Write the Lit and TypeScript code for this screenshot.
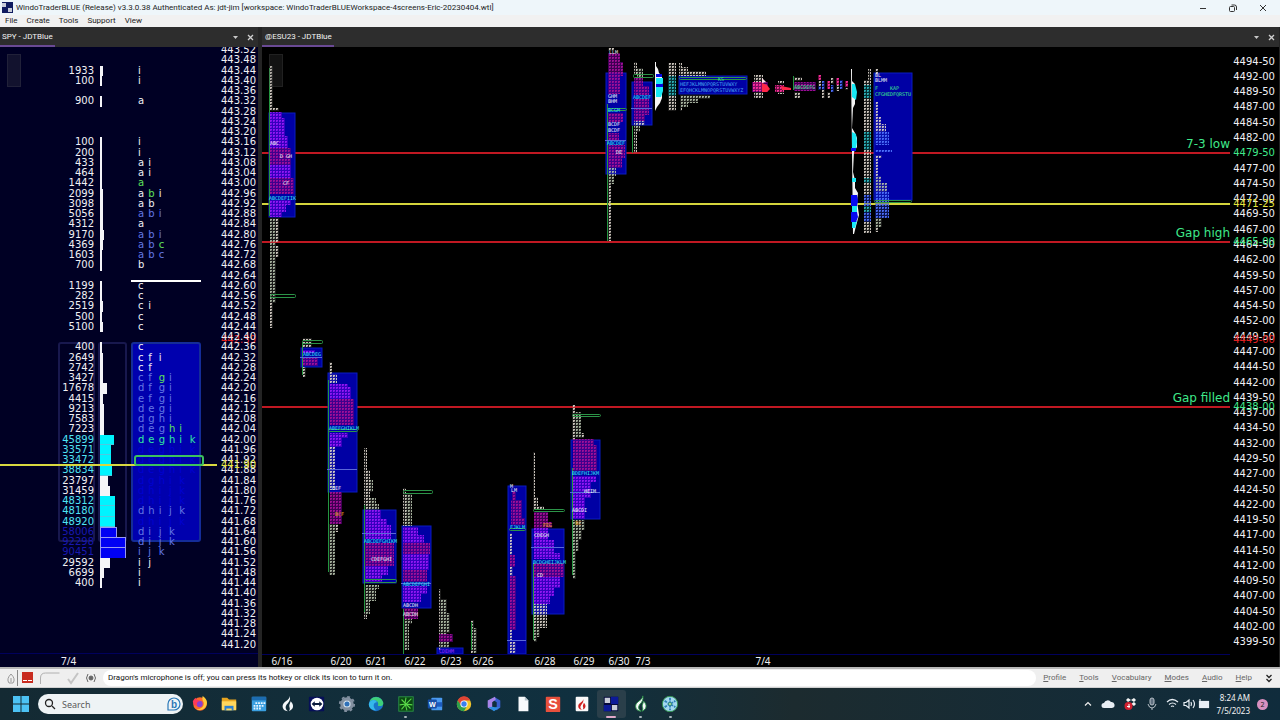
import { LitElement, html, svg, css } from "lit";
import { customElement } from "lit/decorators.js";

/* volume, marks, heat. Each mark is a letter followed by its tone digit:
   0 white, 1 green, 2 soft blue, 3 nearly hidden, 4 mint */
const SPY_ROWS: Record<string, [number, string, string?]> = {
  "443.44": [1933, "i0"], "443.40": [100, "i0"], "443.32": [900, "a0"],
  "443.16": [100, "i0"], "443.12": [200, "i0"], "443.08": [433, "a0i0"],
  "443.04": [464, "a0i0"], "443.00": [1442, "a1"], "442.96": [2099, "a0b1i0"],
  "442.92": [3098, "a0b0"], "442.88": [5056, "a2b2i2"], "442.84": [4312, "a0"],
  "442.80": [9170, "a2b2i2"], "442.76": [4369, "a2b2c1"], "442.72": [1603, "a2b2c2"],
  "442.68": [700, "b0"], "442.60": [1199, "c0"], "442.56": [282, "c0"],
  "442.52": [2519, "c0i0"], "442.48": [500, "c0"], "442.44": [5100, "c0"],
  "442.36": [400, "c0"], "442.32": [2649, "c0f0i0"], "442.28": [2742, "c0f0"],
  "442.24": [3427, "c2f2g1i2"], "442.20": [17678, "d2f2g2i2"], "442.16": [4415, "e2f2g2i2"],
  "442.12": [9213, "d2e2g2i2"], "442.08": [7583, "d2g2h2i2"], "442.04": [7223, "d2e2g2h1i1"],
  "442.00": [45899, "d4e4g4h4i4k4", "hot"], "441.96": [33571, "d3e3g3h3i3k3", "hot"],
  "441.92": [33472, "d3e3g3h3i3k3", "hot"], "441.88": [38834, "d3e3g3h3i3k3", "hot"],
  "441.84": [23797, "d3g3h3i3k3"], "441.80": [31459, "d3h3i3j3k3"],
  "441.76": [48312, "d3h3i3j3k3", "hot"], "441.72": [48180, "d2h2i2j2k2", "hot"],
  "441.68": [48920, "d3h3i3j3k3", "hot"], "441.64": [58006, "d2i2j2k2", "peak"],
  "441.60": [92298, "d2i2j2k2", "peak"], "441.56": [90451, "i2j2k2", "peak"],
  "441.52": [29592, "i0j0"], "441.48": [6699, "i0"], "441.44": [400, "i0"],
};
const SPY_TOP = 443.52;
const SPY_COUNT = 59;
const MAX_VOLUME = 92298;
const spyPrices = Array.from({ length: SPY_COUNT }, (_, i) => (SPY_TOP - i * 0.04).toFixed(2));
const spyY = (p: number) => (((SPY_TOP - p) / 0.04 + 0.5) / SPY_COUNT) * 100;

const ES_TOP = 4494.5;
const ES_COUNT = 39;
const esLabel = (p: number) => {
  const whole = Math.floor(p);
  return `${whole}-${String(Math.round((p - whole) * 100)).padStart(2, "0")}`;
};
const esPrices = Array.from({ length: ES_COUNT }, (_, i) => ES_TOP - i * 2.5);
const esY = (p: number) => (((ES_TOP - p) / 2.5 + 0.5) / ES_COUNT) * 100;
const LEVELS = [
  { price: 4479.5, name: "7-3 low", line: "red", tag: "green" },
  { price: 4471.25, name: "", line: "yellow", tag: "yellow" },
  { price: 4465, name: "Gap high", line: "red", tag: "green" },
  { price: 4449, name: "", line: "", tag: "red" },
  { price: 4438, name: "Gap filled", line: "red", tag: "green" },
];

const TONES: Record<string, string> = {
  w: "#d8d0c8", g: "#b0bca8", p: "#9818f8", m: "#a81098", t: "#30b8c0",
  b: "#4f74ff", k: "#ff2fa0",
};
type Block = [tone: string, x0: number, y0: number, x1: number, y1: number];
type Note = [text: string, x: number, y: number, fill: string];
interface Session {
  area?: [number, number, number, number];
  open?: [number, number, number, number];
  stem?: [number, number, number];
  mid?: number;
  blocks: Block[];
  notes?: Note[];
}
const CY = "#35e0f5", WH = "#f4eef8", GR = "#3fe08c", OR = "#f0a828";

const SESSIONS: Session[] = [
  { area: [269, 113, 295, 217], open: [270, 294, 296, 298], stem: [269, 68, 216],
    blocks: [["w", 270, 66, 273, 111], ["w", 273, 108, 279, 111], ["p", 270, 112, 282, 118], ["p", 270, 118, 285, 136],
      ["p", 270, 136, 288, 148], ["m", 270, 148, 291, 165], ["p", 270, 165, 291, 178], ["m", 270, 178, 294, 194],
      ["p", 270, 200, 291, 205], ["p", 270, 205, 286, 212], ["p", 270, 212, 282, 217],
      ["g", 270, 218, 276, 303], ["w", 276, 218, 279, 242], ["w", 276, 246, 279, 257], ["w", 270, 303, 273, 328]],
    notes: [["ABC", 270, 145, WH], ["D GH", 280, 158, WH], ["CF", 283, 185, WH], ["ABCDEFIIK", 269, 200, CY]] },
  { area: [301, 348, 322, 367], open: [302, 340, 323, 344], mid: 357, stem: [302, 342, 375],
    blocks: [["w", 303, 338, 312, 347], ["p", 303, 350, 315, 353], ["m", 303, 357, 318, 366], ["w", 303, 367, 306, 377]],
    notes: [["ABCDEG", 303, 356, CY]] },
  { area: [328, 373, 357, 492], open: [328, 429, 358, 432], mid: 469, stem: [328, 380, 572],
    blocks: [["w", 329, 362, 332, 374], ["w", 329, 374, 337, 383], ["p", 330, 384, 348, 387], ["p", 330, 387, 351, 399],
      ["m", 330, 399, 354, 425], ["p", 330, 433, 348, 438], ["p", 330, 438, 342, 447], ["w", 329, 447, 335, 490],
      ["m", 330, 492, 342, 524], ["g", 329, 524, 335, 575], ["w", 335, 524, 338, 532]],
    notes: [["ABEFGHIKLM", 329, 430, CY], ["DEF", 332, 490, WH], ["BCF", 335, 516, OR]] },
  { area: [363, 510, 396, 583], open: [364, 579, 397, 583], mid: 533, stem: [364, 505, 612],
    blocks: [["w", 364, 448, 367, 510], ["w", 367, 470, 370, 510], ["g", 370, 480, 373, 492], ["g", 370, 498, 376, 504], ["g", 370, 504, 379, 510],
      ["p", 364, 510, 381, 519], ["p", 364, 519, 387, 525], ["p", 364, 525, 391, 539], ["m", 364, 543, 394, 566],
      ["p", 364, 566, 388, 575], ["p", 364, 575, 382, 582], ["g", 364, 585, 379, 589], ["g", 364, 589, 376, 601], ["g", 364, 601, 370, 614], ["w", 364, 614, 367, 619]],
    notes: [["ABCDEFGHIKM", 364, 543, CY], ["CDEFGHI", 371, 561, WH]] },
  { area: [402, 526, 431, 608], open: [403, 490, 433, 494], mid: 583, stem: [403, 609, 654],
    blocks: [["w", 403, 488, 406, 526], ["g", 406, 494, 412, 526], ["p", 403, 527, 418, 535], ["p", 403, 535, 424, 543],
      ["m", 403, 543, 430, 554], ["p", 403, 554, 429, 570], ["m", 403, 570, 427, 582], ["p", 403, 586, 427, 594], ["p", 403, 594, 421, 602],
      ["m", 403, 608, 418, 619], ["g", 403, 619, 412, 624], ["g", 403, 624, 409, 650]],
    notes: [["ABCDEFGHI", 403, 586, CY], ["ABCDH", 403, 607, WH], ["ABCDH", 403, 616, WH]] },
  { area: [437, 648, 463, 654],
    blocks: [["w", 439, 589, 441, 650], ["g", 441, 599, 447, 635], ["g", 447, 613, 450, 633], ["m", 439, 634, 453, 642], ["g", 440, 642, 449, 648]],
    notes: [["CDEHM", 439, 653, "#a030ff"]] },
  { stem: [471, 622, 650], blocks: [["w", 471, 620, 474, 653], ["g", 474, 628, 477, 653]] },
  { area: [508, 486, 526, 654], open: [509, 528, 526, 531], mid: 640,
    blocks: [["m", 512, 492, 516, 500], ["m", 511, 500, 522, 518], ["m", 511, 518, 525, 525], ["w", 510, 533, 512, 555], ["m", 510, 555, 515, 567],
      ["w", 510, 567, 513, 576], ["m", 510, 576, 516, 630], ["w", 510, 630, 512, 640], ["w", 510, 642, 516, 653]],
    notes: [["M", 510, 488, WH], ["LM", 511, 492, WH], ["FJKLM", 510, 529, CY]] },
  { area: [532, 529, 564, 614], open: [533, 509, 565, 512], mid: 547, stem: [533, 563, 640],
    blocks: [["w", 533, 452, 535, 510], ["w", 535, 497, 538, 510], ["w", 538, 506, 544, 510], ["m", 534, 512, 548, 522], ["m", 534, 522, 552, 528],
      ["p", 534, 528, 548, 540], ["p", 534, 540, 554, 553], ["p", 534, 553, 560, 559], ["m", 534, 563, 564, 577],
      ["p", 534, 577, 560, 588], ["p", 534, 588, 554, 596], ["p", 534, 596, 550, 604], ["w", 534, 604, 547, 628], ["g", 534, 628, 540, 637], ["g", 534, 637, 537, 642]],
    notes: [["FEG", 543, 527, OR], ["CDEGH", 534, 537, WH], ["BCDGHEIJKLM", 533, 564, CY], ["CD", 537, 577, WH]] },
  { area: [571, 440, 600, 519], open: [572, 414, 601, 417], mid: 492, stem: [572, 468, 575],
    blocks: [["w", 572, 405, 575, 440], ["g", 575, 412, 581, 438], ["w", 581, 433, 584, 438], ["m", 573, 439, 594, 445], ["m", 573, 445, 597, 471],
      ["p", 573, 476, 596, 482], ["p", 573, 482, 591, 498], ["p", 573, 498, 585, 519], ["g", 573, 520, 585, 530], ["g", 573, 530, 582, 540], ["g", 573, 540, 579, 551], ["g", 573, 551, 576, 579]],
    notes: [["BDEFHIJKM", 572, 475, CY], ["HEIM", 584, 493, WH], ["ABCDI", 572, 512, WH], ["BC", 575, 525, OR]] },
  { area: [606, 73, 626, 174], open: [607, 108, 627, 111], mid: 140, stem: [607, 104, 241],
    blocks: [["w", 608, 48, 614, 51], ["m", 608, 53, 620, 62], ["m", 608, 62, 623, 76], ["m", 608, 76, 620, 94], ["m", 608, 113, 623, 122],
      ["m", 608, 133, 619, 140], ["m", 608, 145, 625, 158], ["m", 608, 158, 622, 168], ["g", 608, 168, 616, 176], ["g", 608, 176, 614, 184], ["w", 608, 184, 611, 241]],
    notes: [["LLM", 609, 54, WH], ["GHM", 608, 98, WH], ["BHM", 608, 103, WH], ["BCGM", 608, 112, CY], ["BCDF", 608, 126, WH], ["BCDF", 608, 132, WH], ["ABCDEF", 607, 145, CY], ["DE", 616, 154, WH]] },
  { area: [632, 82, 652, 125], open: [633, 74, 654, 78], mid: 108, stem: [632, 126, 153],
    blocks: [["w", 634, 62, 637, 74], ["g", 637, 68, 643, 78], ["m", 634, 78, 643, 86], ["m", 634, 86, 649, 95], ["m", 634, 99, 649, 115],
      ["m", 634, 115, 645, 121], ["w", 634, 121, 645, 125], ["g", 634, 125, 640, 132], ["w", 634, 132, 637, 153]],
    notes: [["ABCDEF", 633, 99, CY]] },
  { blocks: [["w", 668, 63, 676, 76], ["t", 668, 76, 676, 96], ["w", 668, 96, 676, 111]] },
  { area: [679, 76, 747, 94], open: [679, 77, 747, 80],
    blocks: [["w", 679, 63, 682, 67], ["w", 679, 67, 688, 71], ["w", 679, 71, 706, 76], ["g", 680, 95, 710, 99], ["g", 680, 99, 698, 103], ["g", 680, 103, 688, 107], ["w", 680, 107, 682, 111]],
    notes: [["HEFJKLMNOPQRSTUVWXY", 680, 86, "#48a4f0"], ["EFQHCKLMNOPQRSTUVWXYZ", 680, 92, "#48a4f0"], ["KS", 718, 81, GR]] },
  { blocks: [["w", 754, 75, 763, 82], ["m", 752, 82, 768, 92], ["k", 753, 82, 762, 91], ["w", 754, 92, 763, 98]] },
  { blocks: [["w", 778, 81, 784, 84], ["k", 775, 85, 784, 92], ["w", 778, 92, 784, 94]] },
  { stem: [793, 76, 90], blocks: [["w", 794, 77, 802, 81], ["m", 794, 82, 816, 91], ["w", 794, 92, 800, 98]],
    notes: [["ABCDEFG", 794, 89, GR]] },
  { blocks: [["k", 818, 75, 821, 80], ["w", 818, 81, 821, 86], ["b", 818, 86, 821, 90], ["b", 822, 81, 825, 90], ["w", 822, 90, 825, 98], ["k", 827, 81, 830, 89], ["w", 827, 92, 830, 98],
      ["w", 831, 78, 834, 84], ["b", 831, 85, 834, 92], ["k", 836, 78, 839, 85], ["w", 836, 85, 839, 91], ["b", 840, 80, 843, 89], ["k", 845, 81, 848, 87], ["w", 845, 88, 848, 90]] },
  { blocks: [["w", 864, 80, 871, 85], ["w", 864, 98, 871, 132], ["w", 868, 69, 871, 80], ["w", 864, 150, 871, 178], ["w", 864, 183, 871, 195], ["w", 864, 222, 871, 233],
      ["t", 864, 85, 871, 98], ["t", 864, 132, 871, 150], ["t", 864, 178, 871, 183], ["b", 864, 195, 871, 206], ["t", 864, 206, 871, 212], ["b", 864, 212, 871, 222]] },
  { area: [874, 73, 912, 200], open: [874, 200, 912, 203],
    blocks: [["w", 875, 69, 878, 74], ["w", 875, 102, 878, 124], ["w", 878, 117, 881, 124], ["w", 875, 124, 886, 132], ["b", 875, 132, 889, 145],
      ["b", 875, 150, 892, 152], ["w", 875, 155, 882, 158], ["w", 875, 158, 878, 176], ["g", 875, 176, 881, 183], ["g", 875, 183, 887, 192], ["b", 875, 192, 889, 218], ["g", 875, 218, 882, 227], ["w", 875, 227, 878, 232]],
    notes: [["BL", 875, 77, WH], ["BLMM", 875, 82, WH], ["F    KAP", 875, 90, GR], ["CFGHEDFQRSTU", 875, 96, GR]] },
];
const DATES: [string, number][] = [["6/16", 282], ["6/20", 341], ["6/21", 376], ["6/22", 415], ["6/23", 451],
  ["6/26", 483], ["6/28", 545], ["6/29", 584], ["6/30", 619], ["7/3", 643], ["7/4", 763]];

const drawSession = (s: Session) => svg`
  ${s.area ? svg`<rect class="area" x=${s.area[0]} y=${s.area[1]} width=${s.area[2] - s.area[0]} height=${s.area[3] - s.area[1]}/>` : ""}
  ${s.blocks.map(([t, x0, y0, x1, y1]) => svg`
    <rect class="haze-${t}" x=${x0} y=${y0} width=${x1 - x0} height=${y1 - y0}/>
    <rect fill="url(#dots-${t})" x=${x0} y=${y0} width=${x1 - x0} height=${y1 - y0}/>`)}
  ${s.stem ? svg`<path class="stem" d="M${s.stem[0] + 0.5} ${s.stem[1]}V${s.stem[2]}"/>` : ""}
  ${s.mid && s.area ? svg`<path class="mid" d="M${s.area[0] - 1} ${s.mid + 0.5}H${s.area[2]}"/>` : ""}
  ${s.open ? svg`<rect class="open" x=${s.open[0] + 0.5} y=${s.open[1] + 0.5} width=${s.open[2] - s.open[0] - 1} height=${s.open[3] - s.open[1] - 1} rx="1"/>` : ""}
  ${(s.notes ?? []).map(([t, x, y, f]) => svg`<text class="note" x=${x} y=${y} fill=${f}>${t}</text>`)}`;

const flame = (c: string) => svg`<path fill=${c} d="M12 2c0 5-8 6-8 11.500 0 3.500 3 5.500 6 5.500-3-2-3.500-5-1-8C11 9 13 6 12 2z"/><path fill=${c} d="M13 8c4 4 3.500 9-2 11 1.500-2 1-3.500 .5-5-.5-2 1-4 1.500-6z"/>`;
const APPS: { name: string; state?: string; art: unknown }[] = [
  { name: "Firefox", art: svg`<circle cx="10" cy="11" r="7.500" fill="#ff6a2a"/><path fill="#ffc93a" d="M13 2c4 3 6 6 4 11-2 4-7 6-11 4 6 0 9-4 8-8-1-2-2-4-1-7z"/><circle cx="9.500" cy="11" r="3.500" fill="#8a3fd0"/><path fill="#ff3a5a" d="M2 8c1-2 2-3 3-4l1 2c2 0 3 1 4 2-3 0-4 2-3 4-2 1-4 2-5-4z"/>` },
  { name: "File Explorer", art: svg`<path fill="#e8a520" d="M2 4h6l2 2h8v11H2z"/><path fill="#ffd65c" d="M2 8h16v10H2z"/><path fill="#2a7fd0" d="M5 13h10v5H5z"/><path fill="#ffd65c" d="M7 16h6v2H7z"/>` },
  { name: "Calendar", art: svg`<rect x="2" y="3" width="16" height="16" rx="1" fill="#3a9fe0"/><path fill="#1c6cb0" d="M2 3h16v4H2z"/><path stroke="#e8f6ff" stroke-width="2" stroke-dasharray="2 1" d="M6 10h11M4 13h12M4 16h9"/>` },
  { name: "Dragon", art: flame("#f5f8fa") },
  { name: "TeamViewer", art: svg`<rect x="1" y="3" width="17" height="16" rx="1" fill="#060f58"/><circle cx="10" cy="11" r="7" fill="#fff"/><path fill="#0a1b3c" d="M4 11l3.500-3v2h5V8l3.500 3-3.500 3v-2h-5v2z"/>` },
  { name: "Settings", art: svg`<circle cx="10" cy="11" r="5.500" fill="none" stroke="#8390a0" stroke-width="4"/><circle cx="10" cy="11" r="8" fill="none" stroke="#8390a0" stroke-width="2" stroke-dasharray="3.140 3.140"/><circle cx="10" cy="11" r="4" fill="#dce8f2"/><circle cx="10" cy="11" r="2.800" fill="#2f70b8"/>` },
  { name: "Edge", art: svg`<circle cx="10" cy="11" r="8" fill="#1a74c8"/><path fill="#3ecf7a" d="M3 8c2-6 12-7 15 1 1 4-3 5-6 4 2-5-3-8-9-5z"/><path fill="#35b8ea" d="M2 11c1-5 8-6 9-2-4 0-5 5-1 9-5 0-8-3-8-7z"/>` },
  { name: "Charting", state: "open", art: svg`<rect x="2" y="3" width="16" height="16" fill="#0a4a12"/><g fill="none" stroke="#58d848" stroke-width="1.200"><path d="M10 4l-1 6 2 8M3 12l7-1 7 1M5 6l5 5 5 5M16 5l-6 6-5 6"/></g>` },
  { name: "Word", art: svg`<rect x="6" y="4" width="12" height="14" rx="1" fill="#4a9af0"/><path fill="#1c5cc0" d="M6 9h12v5H6z"/><rect x="2" y="6" width="10" height="10" rx="1" fill="#184fa8"/><text x="7" y="14" class="logo" font-size="8">W</text>` },
  { name: "Chrome", art: svg`<circle cx="10" cy="11" r="8" fill="#f0c42c"/><path fill="#e04434" d="M3 7c3-6 11-6 14 0h-7l-4 5z"/><path fill="#2ea04c" d="M3 7c-3 5 1 12 7 12l3.500-6H7z"/><circle cx="10" cy="11" r="4" fill="#fff"/><circle cx="10" cy="11" r="3" fill="#3a7ff0"/>` },
  { name: "Microsoft 365", art: svg`<path fill="#3a5fd0" d="M10 3l7 4v8l-4 3-3-2 3-2V9l-3-2z"/><path fill="#a884e8" d="M11 3L3 7v8l4 2 1-2V9l4-3z"/><path fill="#2f8fe0" d="M4 15l4-1 5 1 4-1-7 5z"/>` },
  { name: "Document", art: svg`<path fill="#f8fafc" d="M5 3h7l4 4v12H5z"/><path fill="#b8c4cc" d="M12 3v4h4z"/>` },
  { name: "Snagit", art: svg`<rect x="2" y="3" width="16" height="17" rx="1" fill="#e8503c"/><text x="10" y="17" class="logo" font-size="16">S</text>` },
  { name: "Dragon Bar", art: svg`<rect x="3" y="3" width="14" height="16" rx="1" fill="#fafafa"/><g transform="translate(3 4) scale(.7)">${flame("#d02020")}</g>` },
  { name: "WindoTrader", state: "active", art: svg`<path fill="#04083c" d="M2 3h16v16H2z"/><path fill="#c8ccd8" d="M3 4h6v6H3zM11 12h6v6h-6z"/><path fill="#0c1a98" d="M10 3h8v8h-8zM2 12h8v7H2z"/>` },
  { name: "Dragon NaturallySpeaking", state: "open", art: flame("#f5f8fa") },
  { name: "Snowflake", state: "open", art: svg`<circle cx="10" cy="11" r="8.500" fill="#a4d8f0"/><path stroke="#2f80b8" stroke-width="2" stroke-dasharray="3 1" d="M10 4v14M4 7.500l12 7M4 14.500l12-7"/><circle cx="10" cy="11" r="1.500" fill="#fff"/>` },
];

@customElement("app-root")
export class AppRoot extends LitElement {
  static styles = css`
    :host { display: block; font-family: "Noto Sans", sans-serif; }
    * { box-sizing: border-box; }
    button { border: 0; padding: 0; background: none; color: inherit; font: inherit; display: inline-flex; align-items: center; justify-content: center; }
    svg { display: block; }
    .app { height: 100vh; min-height: 480px; display: flex; flex-direction: column; background: #242424; }
    .title { height: 15px; display: flex; align-items: center; background: #eef6fa; color: #1c1c1c; font: 8px/15px Roboto, sans-serif; padding: 0 9px 0 2px; flex: none; }
    .title h1 { font: inherit; margin: 0 auto 0 3px; white-space: nowrap; }
    .win { display: flex; gap: 14px; }
    .win button { width: 16px; height: 15px; }
    .menu { height: 12px; flex: none; display: flex; gap: 9px; padding-left: 5px; background: #f1f1f1; color: #222; font: 8px/12px Roboto, sans-serif; }
    .dock { flex: 1; min-height: 0; display: flex; gap: 4px; }
    .panel { display: flex; flex-direction: column; min-width: 0; }
    .spy { flex: 0 0 258px; }
    .es { flex: 1; padding-right: 1px; }
    .tabs { height: 20px; flex: none; display: flex; justify-content: space-between; background: #2d2d2d; color: #f2f2f2; font: 8px/18px Roboto, sans-serif; }
    .tab { border-bottom: 2px solid #6a4a94; padding: 1px 2px 0; }
    .es .tab { padding-left: 3px; }
    .acts { display: flex; gap: 6px; color: #c8c8c8; padding-right: 3px; }
    .acts button { width: 9px; }
    .chart { flex: 1; min-height: 0; position: relative; overflow: hidden; display: flex; flex-direction: column; font-family: "DejaVu Sans", sans-serif; font-size: 10px; line-height: 10px; color: #f0f0f4; }
    .spy .chart { background: #000024; }
    .es .chart { background: #000; }
    .handle { position: absolute; top: 7px; left: 7px; width: 14px; height: 33px; background: rgb(90 90 90 / .2); border: 1px solid rgb(120 120 120 / .15); z-index: 2; }
    .ladder { position: relative; flex: 1; min-height: 0; display: flex; flex-direction: column; margin-top: -2px; margin-bottom: 3px; }
    .row { flex: 1; min-height: 0; display: grid; grid-template-columns: 94px 6px 26px 12px 62px 1fr; align-items: center; padding-right: 2px; position: relative; }
    .vol { text-align: right; }
    .vol.hot { color: #4fe4f4; }
    .vol.peak { color: #1818b0; }
    .bar { grid-column: 3; height: 100%; background: #f4f4f8; }
    .bar.hot { background: #00f4ff; border-bottom: 1px solid #50c8e0; }
    .bar.peak { background: #0000f4; border: 1px solid #9898f0; border-bottom: 0; }
    .marks { grid-column: 5; display: flex; }
    .mark { flex: 0 0 calc(100% / 6); }
    .t1 { color: #5fe05a; }
    .t2 { color: #6478e4; }
    .t3 { color: #0000d0; }
    .t4 { color: #30e8a0; }
    .price { grid-column: 6; text-align: right; white-space: nowrap; }
    .zone { position: absolute; border: 2px solid #18184e; border-radius: 3px; }
    .zone.volumes { left: 58px; width: 37px; }
    .zone.bars { left: 98px; width: 29px; }
    .zone.value { left: 131px; width: 70px; background: #0000ae; border-color: #142c98; }
    .rule { position: absolute; height: 2px; }
    .rule.split { left: 131px; width: 70px; background: #fff; }
    .rule.last { left: 0; width: 217px; background: #d8d840; z-index: 1; }
    .poc { position: absolute; left: 134px; width: 70px; height: 11px; margin-top: -5px; border: 2px solid #3cc060; border-radius: 3px; z-index: 1; }
    .tag { position: absolute; right: 2px; margin-top: -5px; }
    .green { color: #3fe88a; }
    .yellow { color: #e4e43c; }
    .red { color: #e02020; }
    .axis { height: 14px; flex: none; border-top: 1px solid #00005c; padding: 1px 0 0 61px; font-family: "Noto Sans", sans-serif; line-height: 12px; }
    .plot { position: absolute; inset: 0; width: 100%; height: 100%; z-index: 1; }
    .scale { position: relative; flex: 1; min-height: 0; display: flex; flex-direction: column; margin: 7px 0 17px; }
    .scale .step { flex: 1; min-height: 0; display: flex; align-items: center; justify-content: flex-end; padding-right: 4px; }
    .level { position: absolute; left: 0; right: 49px; height: 2px; margin-top: -1px; }
    .level.red { background: #c01822; }
    .level.yellow { background: #d4d43c; }
    .name { position: absolute; right: 49px; font-size: 12px; line-height: 14px; margin-top: -16px; color: #3fe88a; }
    .scale .tag { right: 4px; }
    .area { fill: #0000a4; stroke: #0a1cc0; stroke-width: 1; }
    .haze-p { fill: #5a00d0; opacity: .6; }
    .haze-m { fill: #600080; opacity: .65; }
    .haze-w, .haze-g { fill: #a0a09c; opacity: .16; }
    .haze-t { fill: #108890; opacity: .35; }
    .haze-b { fill: #1830c0; opacity: .4; }
    .haze-k { fill: #d01878; opacity: .5; }
    .stem { stroke: #24953f; stroke-width: 1; fill: none; }
    .mid { stroke: #5a68d8; fill: none; }
    .open { stroke: #2c9448; fill: none; }
    .note { font: 5px "DejaVu Sans Mono", monospace; white-space: pre; }
    .date { font: 10px "Noto Sans", sans-serif; fill: #f0f0f0; text-anchor: middle; }
    .logo { font-family: "Liberation Sans", sans-serif; font-weight: bold; fill: #fff; text-anchor: middle; }
    .bing { fill: #2a78b8; stroke: none; }
    .status { height: 21px; flex: none; display: flex; align-items: center; background: #efefef; border-top: 2px solid #b8b8b8; border-bottom: 1px solid #d0d0d0; font: 8px/12px Roboto, sans-serif; padding-right: 7px; gap: 13px; color: #666; }
    .tools { flex: none; width: 103px; height: 100%; display: flex; align-items: center; gap: 3px; padding-left: 4px; margin-right: -13px; }
    .message { flex: 1; background: #fff; height: 16px; line-height: 16px; border-radius: 8px; color: #111; padding-left: 5px; white-space: nowrap; overflow: hidden; margin-right: -6px; }
    .status a { display: inline-block; color: inherit; text-decoration: none; }
    .status a::first-letter { text-decoration: underline; }
    .task { height: 32px; flex: none; display: flex; align-items: center; background: linear-gradient(90deg, #142a33, #10303f 45%, #1c2b2f 62%, #102c3c); color: #f4f4f4; padding: 0 12px; }
    .search { width: 145px; height: 20px; margin: 0 2px 0 8px; border-radius: 10px; background: #eef3f5; display: flex; align-items: center; gap: 6px; padding: 0 2px 0 6px; color: #555; }
    .search input { border: 0; outline: 0; background: none; flex: 1; min-width: 0; font: 9px "Noto Sans", sans-serif; padding: 0; color: #555; }
    .search input::placeholder { color: #5a5a5a; opacity: 1; }
    .apps { display: flex; width: 500px; height: 100%; align-items: center; }
    .apps button { flex: 1; height: 28px; position: relative; border-radius: 3px; }
    .apps .active { background: #2a3f4a; }
    .apps .open::after, .apps .active::after { content: ""; position: absolute; bottom: 0; width: 3px; height: 2px; border-radius: 1px; background: #a8b4ba; }
    .apps .active::after { width: 10px; background: #e0a8c8; }
    .tray { margin-left: auto; display: flex; align-items: center; gap: 7px; }
    .clock { font-size: 8px; line-height: 13px; text-align: right; }
    .badge { width: 11px; height: 11px; border-radius: 50%; background: #d890c0; color: #222; font-size: 7px; line-height: 11px; text-align: center; }
  `;

  private panelActions() {
    return html`<div class="acts">
      <button aria-label="Panel menu"><svg width="9" height="9" viewBox="0 0 9 9"><path fill="#c8c8c8" d="M2 3h5L4.500 6z"/></svg></button>
      <button aria-label="Close panel"><svg width="9" height="9" viewBox="0 0 9 9"><path stroke="#d0d0d0" stroke-width="1.300" d="M2 2l5 5M7 2L2 7"/></svg></button>
    </div>`;
  }

  private spyRow(price: string) {
    const data = SPY_ROWS[price];
    if (!data) return html`<div class="row"><span class="price">${price}</span></div>`;
    const [volume, marks, heat = ""] = data;
    const width = 8 + (volume / MAX_VOLUME) * 92;
    return html`<div class="row">
      <span class="vol ${heat}">${volume}</span>
      <span class="bar ${heat}" style="width:${width}%"></span>
      <span class="marks">${(marks.match(/../g) ?? []).map((m) => html`<span class="mark t${m[1]}">${m[0]}</span>`)}</span>
      <span class="price">${price}</span>
    </div>`;
  }

  private spyPanel() {
    const zoneTop = spyY(442.38);
    const zoneHeight = spyY(441.6) - zoneTop;
    return html`<section class="panel spy">
      <div class="tabs"><span class="tab">SPY - JDTBlue</span>${this.panelActions()}</div>
      <div class="chart">
        <div class="handle"></div>
        <div class="ladder">
          ${["volumes", "bars", "value"].map((z) => html`<div class="zone ${z}" style="top:${zoneTop}%;height:${zoneHeight}%"></div>`)}
          <div class="rule split" style="top:${spyY(442.625)}%"></div>
          <span class="tag red" style="top:${spyY(442.39)}%">442.39</span>
          ${spyPrices.map((p) => this.spyRow(p))}
          <div class="rule last" style="top:${spyY(441.905)}%"></div>
          <div class="poc" style="top:${spyY(441.92)}%"></div>
          <span class="tag yellow" style="top:${spyY(441.9)}%">441.90</span>
        </div>
        <div class="axis">7/4</div>
      </div>
    </section>`;
  }

  private esPlot() {
    return html`<svg class="plot" viewBox="262 47 1017 620" preserveAspectRatio="xMinYMin meet" role="img" aria-label="Market profile">
      <defs>${Object.entries(TONES).map(([id, color]) => svg`
        <pattern id="dots-${id}" width="3" height="3" patternUnits="userSpaceOnUse">
          <path d="M0 0h2v1H0zM0 1h1v1H0z" fill=${color} opacity=".9"/><path d="M1 1h1v1H1z" fill=${color} opacity=".5"/>
        </pattern>`)}</defs>
      ${SESSIONS.map(drawSession)}
      <path fill="#f4f4f4" d="M655 62h1v4l2 3 1 4 3 3v22l-2 5-3 4-2 4z"/>
      <path fill="#18e8f4" d="M656 78h7v5l-1 2h1v6l-2 6h-5z"/>
      <path fill="#0808e0" d="M656 74h6v3h-6zM656 84h7v3h-7z"/>
      <path fill="#ff2848" d="M762 83l5 2 3 4-3 3h-5zM781 86l10 2v2h-9z"/><path fill="#ffe0e8" d="M762 78l4 4-4 1z"/>
      <path fill="#f4f4f4" d="M851 69h1v12l3 3v20l-2 4-1 20 3 5 2 5v9l-3 5-1 20 2 8v8l3 5-1 8 2 14-3 11-2 8h-1z"/>
      <path fill="#18e8f4" d="M852 84h3l2 8-1 8-4-3zM852 132l4 2 1 8-1 6h-4zM852 178h4v4h-4zM852 206h5v6h-5zM852 221h5l-2 7h-3z"/>
      <path fill="#0808f0" d="M851 148h5v3h-5zM851 195h6l1 6-1 5h-6zM851 212h6l1 5-2 5h-5z"/>
      <path stroke="#00005c" d="M262 654.500h968"/>
      ${DATES.map(([d, x]) => svg`<text class="date" x=${x} y="665">${d}</text>`)}
    </svg>`;
  }

  private esPanel() {
    return html`<section class="panel es">
      <div class="tabs"><span class="tab">@ESU23 - JDTBlue</span>${this.panelActions()}</div>
      <div class="chart">
        <div class="handle"></div>
        ${this.esPlot()}
        <div class="scale">
          ${esPrices.map((p) => html`<div class="step">${p === 4479.5 ? "" : esLabel(p)}</div>`)}
          ${LEVELS.map((l) => html`
            ${l.line ? html`<div class="level ${l.line}" style="top:${esY(l.price)}%"></div>` : ""}
            ${l.name ? html`<span class="name" style="top:${esY(l.price)}%">${l.name}</span>` : ""}
            <span class="tag ${l.tag}" style="top:${esY(l.price)}%">${esLabel(l.price)}</span>`)}
        </div>
      </div>
    </section>`;
  }

  render() {
    return html`<main class="app">
      <header class="title">
        <svg width="11" height="11" viewBox="0 0 11 11"><path fill="#101c60" d="M0 0h11v11H0z"/><path fill="#c8ccd8" d="M0 1h4v4H0zM6 6h4v4H6z"/></svg>
        <h1>WindoTraderBLUE (Release) v3.3.0.38 Authenticated As: jdt-jim [workspace: WindoTraderBLUEWorkspace-4screens-Eric-20230404.wtl]</h1>
        <div class="win">
          <button aria-label="Minimize"><svg width="8" height="8"><path stroke="#333" d="M1 4.500h6"/></svg></button>
          <button aria-label="Restore"><svg width="8" height="8" fill="none" stroke="#333"><rect x=".5" y="2.500" width="5" height="5" rx="1"/><path d="M2.500 1h3q2 0 2 2v3"/></svg></button>
          <button aria-label="Close"><svg width="8" height="8"><path stroke="#333" d="M1 1l6 6M7 1L1 7"/></svg></button>
        </div>
      </header>
      <nav class="menu">${["File", "Create", "Tools", "Support", "View"].map((m) => html`<button>${m}</button>`)}</nav>
      <div class="dock">${this.spyPanel()}${this.esPanel()}</div>
      <div class="status">
        <div class="tools">
          <svg width="78" height="16" viewBox="0 0 78 16" fill="none" stroke="#999">
            <path d="M7 4q-5 5-2 9h4q3-4-2-9zM7 8v4"/><path stroke="#888" d="M13.500 0v16"/>
            <path fill="#c82c20" stroke="none" d="M18 2h11v11H18z"/><path stroke="#fff" d="M19 10.500h4M24 10.500h4"/>
            <path stroke="#b0b0b0" d="M36.500 14V8q0-5 5-5h14"/><path stroke="#c4c4c4" stroke-width="2" d="M64 9l3 4 7-10"/>
          </svg>
          <svg width="12" height="10" viewBox="0 0 12 10" fill="none" stroke="#666"><circle cx="6" cy="5" r="2" fill="#666"/><path d="M3 1Q0 5 3 9M9 1q3 4 0 8"/></svg>
        </div>
        <div class="message" role="status">Dragon's microphone is off; you can press its hotkey or click its icon to turn it on.</div>
        ${["Profile", "Tools", "Vocabulary", "Modes", "Audio", "Help"].map((m) => html`<a href="#">${m}</a>`)}
        <button aria-label="More"><svg width="8" height="9" fill="none" stroke="#222" stroke-width="1.300"><path d="M1.500 1L4 3.500 6.500 1M1.500 5L4 7.500 6.500 5"/></svg></button>
      </div>
      <footer class="task">
        <button aria-label="Start"><svg width="18" height="18" viewBox="0 0 18 18"><path fill="#4cc2f4" d="M1 1h7.500v7.500H1zM9.500 1H17v7.500H9.500zM1 9.500h7.500V17H1zM9.500 9.500H17V17H9.500z"/></svg></button>
        <label class="search">
          <svg width="12" height="12" viewBox="0 0 12 12" fill="none" stroke="#222" stroke-width="1.300"><circle cx="5" cy="5" r="3.500"/><path d="M8 8l3 3"/></svg>
          <input type="text" placeholder="Search" aria-label="Search">
          <svg width="14" height="14" viewBox="0 0 14 14" fill="none" stroke="#2a78b8" stroke-width="1.200"><path d="M1 13V7a6 6 0 1 1 6 6z"/><text x="7" y="11" class="logo bing" font-size="10">b</text></svg>
        </label>
        <div class="apps">${APPS.map((a) => html`<button class=${a.state ?? ""} aria-label=${a.name}><svg width="18" height="20" viewBox="0 1 20 20">${a.art}</svg></button>`)}</div>
        <div class="tray">
          <svg width="8" height="8" fill="none" stroke="#eee" stroke-width="1.200"><path d="M1 5.500L4 2.500l3 3"/></svg>
          <svg width="18" height="12" viewBox="0 0 18 12"><path fill="#e8eef4" d="M5 10a2.500 2.500 0 0 1 0-5 4 4 0 0 1 7-1 3 3 0 0 1 1 6z"/></svg>
          <svg width="14" height="14" viewBox="0 0 14 14"><path fill="#f4f4f4" d="M4 1l3 2-3 2-2-2zM10 1l2 2-2 2-3-2zM10 5l2 2-2 2-3-2z"/><circle cx="4.500" cy="9" r="4" fill="#d02030"/><path stroke="#fff" d="M5 7v4M3 9.500h3"/></svg>
          <svg width="14" height="14" viewBox="0 0 14 14" fill="none" stroke="#b8c0c8"><rect x="5" y="1" width="4" height="7" rx="2" fill="#607080"/><path d="M3 7q1 4 4 4t4-4M7 11v2"/></svg>
          <svg width="44" height="14" viewBox="0 0 44 14" fill="none" stroke="#e8eef4" stroke-width="1.200"><path d="M1 5q5-5 11 0M3 7.500q3.500-3 7 0M5 9.500q1.500-1 3 0"/><path d="M18 5.500h2l3-2.500v8l-3-2.500h-2zM25 5q1 2 0 4M27 3q3 4 0 8"/><rect x="33.500" y="4.500" width="9" height="6" fill="#e8eef4"/><path d="M34 2v4"/></svg>
          <div class="clock">8:24 AM<br>7/5/2023</div>
          <span class="badge">2</span>
        </div>
      </footer>
    </main>`;
  }
}
